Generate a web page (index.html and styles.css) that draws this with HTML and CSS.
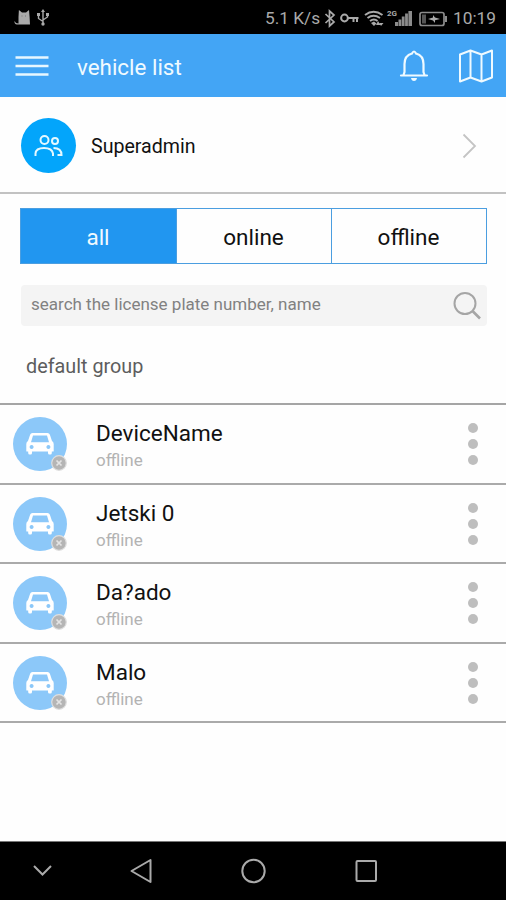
FILE: index.html
```html
<!DOCTYPE html>
<html lang="en">
<head>
<meta charset="utf-8">
<title>vehicle list</title>
<link rel="stylesheet" href="styles.css">
</head>
<body>
<svg class="defs" width="0" height="0">
  <symbol id="car" viewBox="0 0 28 22">
    <path fill="#fff" fill-rule="evenodd" d="M6.500 0h15q1.800 0 2.400 1.700L26 8q1.700 1.200 1.700 3V18q0 .6-.6.6h-1.300V20q0 1.500-1.500 1.500h-.8Q22 21.500 22 20v-1.400H6V20q0 1.500-1.500 1.500h-.8Q2.200 21.500 2.200 20v-1.400H.9q-.6 0-.6-.6v-7q0-1.800 1.700-3L4.100 1.700Q4.700 0 6.500 0zM7 2.500L5 9.300h18l-2-6.800zM5.600 12a2 2 0 1 0 .01 0zM22.400 12a2 2 0 1 0 .01 0z"/>
  </symbol>
</svg>
<div class="status">
  <svg class="status-left" width="38" height="20" viewBox="0 0 38 20">
    <path fill="#aaa" d="M4.500 15.500V9l.4-7L8 4.500h4l3-2.500.6 7 .4 7.500H3q-2.800-.3-2.500-3.500 1 2.500 4 2.500z"/>
    <path d="M7.500 8h1M11 8h1" stroke="#777"/>
    <g stroke="#aaa" stroke-width="1.400" fill="none"><path d="M29 3v13M29 13.500l-4.500-3V6.500M29 12l4.500-3V6"/></g>
    <path fill="#aaa" d="M29 1l2 3h-4zM23 5h3v3h-3zM32 5h3v3h-3z"/><circle cx="29" cy="16" r="1.700" fill="#aaa"/>
  </svg>
  <span class="speed">5.1 K/s</span>
  <svg class="status-icons" width="124" height="22" viewBox="325 6 124 22">
    <g fill="none" stroke="#aaa" stroke-width="1.700">
      <path d="M326.500 13l8.500 8-4.500 4V10l4.500 4-8.500 8"/>
      <circle cx="345.500" cy="17" r="3.400" stroke-width="2"/><path d="M349 17h10.500M354.500 17v4M358 17v4" stroke-width="2"/>
      <path d="M366 14q8.500-6.500 17.500 0M368.500 17q6-4.500 12.500 0M371 20q4-3 7.500 0" stroke-width="2"/>
      <rect x="421" y="11.500" width="24" height="13" rx="2" stroke="#8c8c8c"/>
    </g>
    <path fill="#aaa" d="M372 22l3-1.500 2.500 2-2.500 2.500zM379 20l2.500 4H377zM382 25l-1.500-3h4zM429 18l5-1.500V14l2 2.500 5 1.500-5 1.200V22l-2-2.500z"/>
    <path fill="#8c8c8c" d="M396 21h3v4h-3zM399.500 18.500h2.800V25h-2.800zM402.800 15.500h2.800V25h-2.800zM406.100 12.500h2.800V25h-2.800zM409.400 10h3.600v15h-3.600zM446 15h2v6h-2z"/>
    <path fill="#555" d="M423 13.500h4v9h-4z"/>
    <text class="net" x="388" y="15">2G</text>
  </svg>
  <span class="clock">10:19</span>
</div>
<header class="bar">
  <svg class="menu" width="34" height="22" viewBox="0 0 34 22"><path d="M.5 2.500h33M.5 11h33M.5 19.500h33" stroke="#e8f7ff" stroke-width="2.400"/></svg>
  <h1>vehicle list</h1>
  <svg class="bell" width="30" height="34" viewBox="0 0 30 34" fill="none" stroke="#effaff" stroke-width="2.200">
    <path d="M2 26.500h26M4.500 26l1-3V15Q5.500 6.500 13 4.500q2-4 4 0 7.500 2 7.500 10.500v8l1 3" stroke-linecap="round"/><path d="M12 29h6q-.5 3-3 3t-3-3z" fill="#effaff" stroke="none"/>
  </svg>
  <svg class="map" width="36" height="34" viewBox="0 0 36 34" fill="none" stroke="#effaff" stroke-width="2" stroke-linejoin="round">
    <path d="M2 5.500l10.500-4 11 4 10.500-4v27l-10.500 4-11-4-10.500 4zM12.500 1.500v27M23.500 5.500v27"/>
  </svg>
</header>
<section class="account">
  <div class="avatar">
    <svg width="30" height="24" viewBox="0 0 30 24" fill="none" stroke="#e4f8ff" stroke-width="2">
      <circle cx="10.500" cy="6" r="4"/><circle cx="21" cy="7" r="3"/><path d="M1.500 22v-2.500Q2 14 10 14t9 5.500V22M19.500 14q8 0 8 7h-4"/>
    </svg>
  </div>
  <span class="account-name">Superadmin</span>
  <svg class="chevron" width="16" height="26" viewBox="0 0 16 26" fill="none" stroke="#c4c4c4" stroke-width="1.800"><path d="M1.500 1.500L13 13 1.500 24.500"/></svg>
</section>
<nav class="tabs"><span class="tab active">all</span><span class="tab">online</span><span class="tab">offline</span></nav>
<div class="search">
  <span>search the license plate number, name</span>
  <svg width="30" height="30" viewBox="0 0 30 30" fill="none" stroke="#a5a5a5"><circle cx="13" cy="12.500" r="10.500" stroke-width="2"/><path d="M20.500 20l7.500 7.500" stroke-width="2.600"/></svg>
</div>
<h2 class="group">default group</h2>
<ul class="list">
  <li><div class="device"><svg class="car"><use href="#car"/></svg><svg class="badge" viewBox="0 0 16 16"><circle cx="8" cy="8" r="7.300" fill="#b5b5b5" stroke="#dedede" stroke-width="1.200"/><path d="M5.500 5.500l5 5M10.500 5.500l-5 5" stroke="#e4e4e4" stroke-width="1.700"/></svg></div><div class="info"><b>DeviceName</b><small>offline</small></div><div class="dots"><i></i><i></i><i></i></div></li>
  <li><div class="device"><svg class="car"><use href="#car"/></svg><svg class="badge" viewBox="0 0 16 16"><circle cx="8" cy="8" r="7.300" fill="#b5b5b5" stroke="#dedede" stroke-width="1.200"/><path d="M5.500 5.500l5 5M10.500 5.500l-5 5" stroke="#e4e4e4" stroke-width="1.700"/></svg></div><div class="info"><b>Jetski 0</b><small>offline</small></div><div class="dots"><i></i><i></i><i></i></div></li>
  <li><div class="device"><svg class="car"><use href="#car"/></svg><svg class="badge" viewBox="0 0 16 16"><circle cx="8" cy="8" r="7.300" fill="#b5b5b5" stroke="#dedede" stroke-width="1.200"/><path d="M5.500 5.500l5 5M10.500 5.500l-5 5" stroke="#e4e4e4" stroke-width="1.700"/></svg></div><div class="info"><b>Da?ado</b><small>offline</small></div><div class="dots"><i></i><i></i><i></i></div></li>
  <li><div class="device"><svg class="car"><use href="#car"/></svg><svg class="badge" viewBox="0 0 16 16"><circle cx="8" cy="8" r="7.300" fill="#b5b5b5" stroke="#dedede" stroke-width="1.200"/><path d="M5.500 5.500l5 5M10.500 5.500l-5 5" stroke="#e4e4e4" stroke-width="1.700"/></svg></div><div class="info"><b>Malo</b><small>offline</small></div><div class="dots"><i></i><i></i><i></i></div></li>
</ul>
<footer class="sysnav">
  <svg width="506" height="58" viewBox="0 842 506 58" fill="none" stroke="#aaa" stroke-width="2">
    <path d="M34 866l8.500 8.500 8.500-8.500"/><path d="M131.500 871l19-11v22z" stroke-linejoin="round"/><circle cx="253.500" cy="871" r="11.200"/><rect x="356.500" y="861" width="19.500" height="20" rx="1"/>
  </svg>
</footer>
</body>
</html>
```
FILE: styles.css
```css
* { box-sizing: border-box; }
body {
  margin: 0;
  height: 900px;
  display: flex;
  flex-direction: column;
  overflow: hidden;
  background: #fefefe;
  font-family: Roboto, sans-serif;
  color: #111;
}
svg { display: block; flex: none; }
.defs { position: absolute; }
.status {
  height: 34px;
  background: #000;
  color: #aaa;
  display: flex;
  align-items: center;
  padding: 2px 10px 0 14px;
  font-size: 17.3px;
  flex: none;
}
.speed { margin-left: auto; width: 59px; white-space: nowrap; }
.clock { margin-left: 5px; width: 43px; }
.net { font-size: 8px; font-weight: 700; fill: #aaa; }
.bar {
  height: 63px;
  background: #43a5f5;
  display: flex;
  align-items: center;
  padding: 1px 12px 0 15px;
  flex: none;
}
.bar h1 { margin: 2px auto 0 28px; font-size: 22.4px; font-weight: 400; color: #f0faff; }
.map { margin-left: 29px; }
.account {
  height: 97px;
  display: flex;
  align-items: center;
  padding: 0 28px 0 21px;
  border-bottom: 2px solid #c2c2c2;
  flex: none;
}
.account-name { margin: 4px auto 0 15px; font-size: 19.6px; }
.chevron { margin-top: 2px; }
.avatar {
  width: 55px;
  height: 55px;
  border-radius: 50%;
  background: #03a5fb;
  display: grid;
  place-items: center;
  margin-top: 2px;
}
.tabs {
  height: 56px;
  margin: 14px 19px 0 20px;
  display: grid;
  grid-template-columns: 155px 155px 1fr;
  border: 1px solid #4b9ee0;
  flex: none;
}
.tab { display: flex; align-items: center; justify-content: center; font-size: 22.5px; padding: 2px 1px 0 0; }
.tab + .tab { border-left: 1px solid #4b9ee0; padding-right: 1px; }
.tab.active { background: #2196f0; color: #eff9ff; }
.search {
  height: 41px;
  margin: 21px 19px 0 21px;
  padding: 0 5px 0 10px;
  border-radius: 4px;
  background: #f4f4f4;
  color: #818181;
  font-size: 17px;
  display: flex;
  align-items: center;
  justify-content: space-between;
  flex: none;
}
.search span { padding-bottom: 3px; }
.group { margin: 0; height: 77px; padding: 4px 26px 0; display: flex; align-items: center; font-size: 19.8px; font-weight: 400; color: #5d5d5d; }
.list { margin: 0; padding: 0; list-style: none; border-top: 2px solid #a5a5a5; }
.list li { height: 79.6px; display: flex; align-items: center; border-bottom: 2px solid #aaa; padding: 0 28px 0 13px; }
.device { position: relative; width: 54px; height: 54px; border-radius: 50%; background: #8cc8f9; display: grid; place-items: center; margin-top: 1px; }
.car { width: 28px; height: 22px; }
.badge { position: absolute; width: 16px; height: 16px; right: 0; bottom: 0; }
.info { display: flex; flex-direction: column; margin: 4px auto 0 29px; }
.info b { font-size: 22.5px; line-height: 29px; font-weight: 400; }
.info small { font-size: 17px; line-height: 24px; color: #b3b3b3; }
.dots { display: grid; gap: 6px; margin-top: 1px; }
.dots i { width: 10px; height: 10px; border-radius: 50%; background: #bebebe; }
.sysnav { margin-top: auto; background: #000; height: 59px; border-top: 1px solid #777; flex: none; }
```
